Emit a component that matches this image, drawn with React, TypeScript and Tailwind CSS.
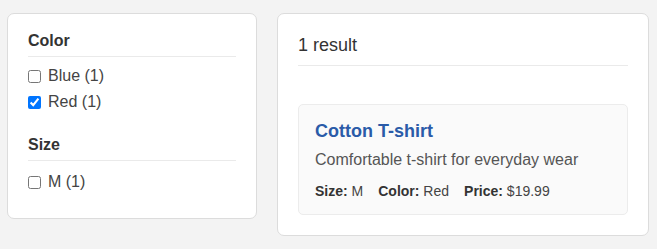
export default function App() {
  const font = { fontFamily: '"Liberation Sans", Arial, sans-serif' };
  return (
    <main className="min-h-[249px] bg-[#f3f3f3] pl-[7px] pr-[8px] pt-[13px] pb-[14px] text-[#333]" style={font}>
      <div className="flex items-start gap-[20px]">
        {/* Filters */}
        <aside className="w-[250px] shrink-0 rounded-[7px] border border-[#dcdcdc] bg-white px-[20px] pt-[18px] pb-[26px]">
          <section className="mb-[24px]">
            <h3 className="border-b border-[#eaeaea] pb-[6px] text-[16px] font-bold leading-[18px] text-[#333]">Color</h3>
            <div className="mt-[9px] flex flex-col gap-[6px]">
              <label className="flex h-[20px] items-center gap-[7px] text-[16px] text-[#444]">
                <input type="checkbox" className="m-0 h-[13px] w-[13px]" />
                Blue (1)
              </label>
              <label className="flex h-[20px] items-center gap-[7px] text-[16px] text-[#444]">
                <input type="checkbox" defaultChecked className="m-0 h-[13px] w-[13px]" />
                Red (1)
              </label>
            </div>
          </section>
          <section>
            <h3 className="border-b border-[#eaeaea] pb-[6px] text-[16px] font-bold leading-[18px] text-[#333]">Size</h3>
            <div className="mt-[11px] flex flex-col gap-[6px]">
              <label className="flex h-[20px] items-center gap-[7px] text-[16px] text-[#444]">
                <input type="checkbox" className="m-0 h-[13px] w-[13px]" />
                M (1)
              </label>
            </div>
          </section>
        </aside>

        {/* Results */}
        <section className="flex-1 rounded-[7px] border border-[#dcdcdc] bg-white px-[20px] pt-[20px] pb-[20px]">
          <div className="border-b border-[#eaeaea] pb-[9px] text-[18px] leading-[22px] text-[#333]">1 result</div>
          <div className="mt-[38px] rounded-[5px] border border-[#ececec] bg-[#fafafa] px-[16px] pt-[15px] pb-[15px]">
            <h2 className="text-[18px] font-bold leading-[22px] text-[#2a5ba8]">Cotton T-shirt</h2>
            <p className="mt-[8px] text-[16px] leading-[20px] text-[#555]">Comfortable t-shirt for everyday wear</p>
            <div className="mt-[13px] flex gap-[15px] text-[14px] leading-[16px] text-[#444]">
              <span><b className="text-[#333]">Size:</b> M</span>
              <span><b className="text-[#333]">Color:</b> Red</span>
              <span><b className="text-[#333]">Price:</b> $19.99</span>
            </div>
          </div>
        </section>
      </div>
    </main>
  );
}
